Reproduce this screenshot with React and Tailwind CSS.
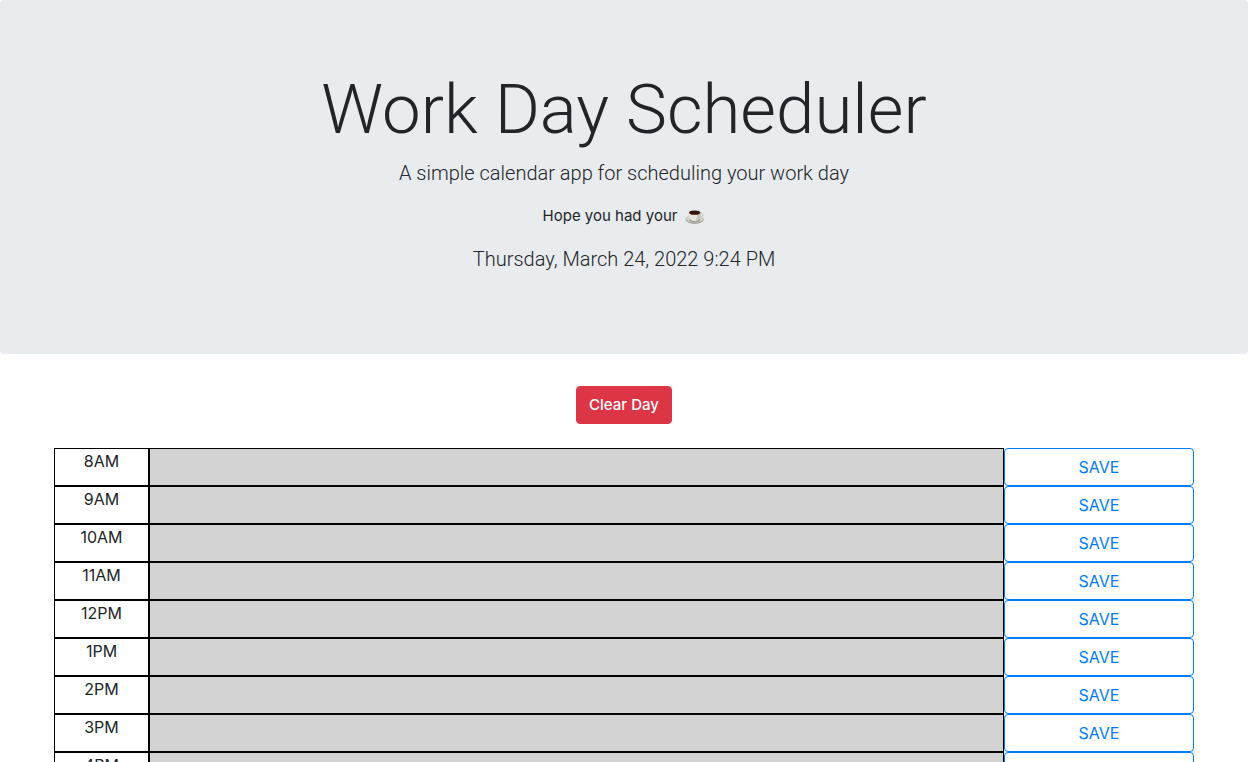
import { useState } from "react";

const HOURS = ["8AM", "9AM", "10AM", "11AM", "12PM", "1PM", "2PM", "3PM", "4PM", "5PM"];

function CoffeeIcon() {
  return (
    <svg viewBox="0 0 60 56" className="h-[18px] w-5" role="img" aria-label="coffee">
      <path d="M26 11c-4-4 3-5 0-10M32 11c-4-4 4-5 1-9" fill="none" stroke="#ffffff" strokeWidth="2.5" />
      <path d="M26 11c-4-4 3-5 0-10" fill="none" stroke="#c3c6c8" strokeWidth="1.5" />
      <ellipse cx="29" cy="39" rx="28" ry="13" fill="#99958c" />
      <ellipse cx="29" cy="36" rx="28" ry="12.5" fill="#d3cfc7" />
      <ellipse cx="29" cy="41" rx="17" ry="7" fill="#a19b91" />
      <path d="M45 20c12-4 14 9-1 13" fill="none" stroke="#d0ccc4" strokeWidth="4" />
      <path d="M9 16c0 14 6 28 20 28s20-14 20-28z" fill="#e6e3de" />
      <path d="M38 21c0 9-2 18-7 22 12-1 18-13 18-26z" fill="#c4c0b9" />
      <ellipse cx="29" cy="17" rx="20" ry="8.5" fill="#dfdcd6" />
      <ellipse cx="29" cy="17.5" rx="17.5" ry="7" fill="#32150e" />
      <path d="M15 21c5 5 23 5 28 0-5 2-23 2-28 0z" fill="#7b4027" />
    </svg>
  );
}

function TimeBlock({ hour, value, onChange }) {
  const id = `event-${hour}`;
  return (
    <div className="grid grid-cols-12">
      <label htmlFor={id} className="col-span-1 border border-black text-center leading-6">
        {hour}
      </label>
      <textarea
        id={id}
        rows={1}
        value={value}
        onChange={(e) => onChange(e.target.value)}
        className="col-span-9 block h-[38px] w-full resize-none overflow-hidden border border-black bg-[#d3d3d3] px-3 py-1 outline-none"
      />
      <button
        type="button"
        className="col-span-2 rounded border border-[#007bff] bg-white px-3 py-1.5 text-base leading-6 text-[#007bff]"
      >
        SAVE
      </button>
    </div>
  );
}

export default function App() {
  const [events, setEvents] = useState({});
  return (
    <div className="min-h-screen bg-white font-['Inter',sans-serif] text-base text-[#212529]">
      <header className="flex flex-col items-center rounded bg-[#e9ecef] px-8 pt-[70px] pb-20 text-center">
        <h1 className="mb-2 font-['Roboto',sans-serif] text-[69px] leading-[80px] font-light">Work Day Scheduler</h1>
        <p className="mb-4 font-['Roboto',sans-serif] text-xl leading-[30px] font-light">
          A simple calendar app for scheduling your work day
        </p>
        <p className="mb-4 flex items-center gap-2 text-[15px] leading-6">
          Hope you had your <CoffeeIcon />
        </p>
        <p className="font-['Roboto',sans-serif] text-xl leading-[30px] font-light">Thursday, March 24, 2022 9:24 PM</p>
      </header>
      <main className="mx-auto flex max-w-[1140px] flex-col pt-8">
        <button
          type="button"
          onClick={() => setEvents({})}
          className="mb-6 self-center rounded border border-[#dc3545] bg-[#dc3545] px-3 py-1.5 text-[15px] leading-6 font-medium text-white"
        >
          Clear Day
        </button>
        {HOURS.map((hour) => (
          <TimeBlock
            key={hour}
            hour={hour}
            value={events[hour] ?? ""}
            onChange={(text) => setEvents({ ...events, [hour]: text })}
          />
        ))}
      </main>
    </div>
  );
}
